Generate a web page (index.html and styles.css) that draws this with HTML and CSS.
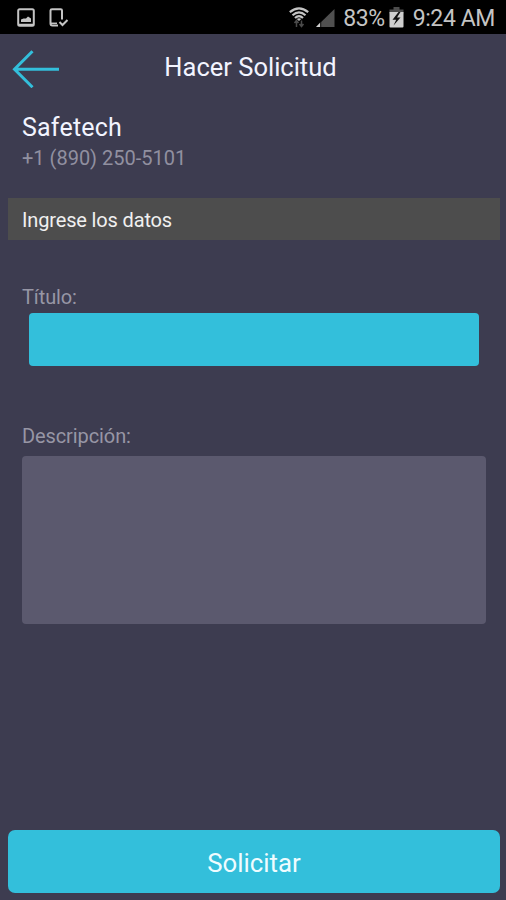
FILE: index.html
```html
<!DOCTYPE html>
<html lang="es">
<head>
    <meta charset="UTF-8">
    <meta name="viewport" content="width=device-width, initial-scale=1.0">
    <title>Hacer Solicitud</title>
    <link rel="stylesheet" href="styles.css">
</head>
<body>

<div class="status-bar">
    <div class="status-left">
        <svg width="18" height="19" viewBox="0 0 18 19" fill="none" stroke="#c4c4c4" stroke-width="2">
            <rect x="1.2" y="1.2" width="15.6" height="16.6" rx="1.5"/>
            <path d="M4 14V11.500l2.500-1L9 10.500l2-2 3 2V14z" fill="#c4c4c4" stroke="none"/>
            <path d="M2 16.500h14" stroke-width="1.500"/>
        </svg>
        <svg width="20" height="20" viewBox="0 0 20 20" fill="none" stroke="#c4c4c4" stroke-width="2">
            <path d="M13 11.500V2.500Q13 1.200 11.700 1.200H3Q1.500 1.200 1.500 2.500V15.500Q1.500 17.500 3.500 17.500H9"/>
            <path d="M2 15.300h6" stroke-width="1.500"/>
            <path d="M10.500 14l3 3 5-5"/>
        </svg>
    </div>
    <div class="status-right">
        <svg class="wifi" width="20" height="21" viewBox="0 0 20 21" fill="none" stroke="#c4c4c4" stroke-width="2.200">
            <path d="M.8 5.200Q10-2.500 19.200 5.200"/>
            <path d="M3.500 8.300Q10 2.500 16.500 8.300"/>
            <path d="M6 11Q10 7.300 14 11"/>
            <path d="M7.800 12Q10 10.500 12.200 12L10 14z" fill="#c4c4c4" stroke="none"/>
            <path d="M7.500 20v-6M5.500 16l2-2.500 2 2.500M12.500 13.500v6M10.500 17l2 2.500 2-2.500" stroke="#4a4a4a" stroke-width="1.500"/>
        </svg>
        <svg class="signal" width="19" height="18" viewBox="0 0 19 18">
            <path d="M18.500 0V18H0z" fill="#505050"/>
            <path d="M5.200 12.500V18H0z" fill="#000"/>
            <path d="M4.200 13.500V18H0z" fill="#d0d0d0"/>
        </svg>
        <span class="percent">83%</span>
        <svg class="battery" width="15" height="21" viewBox="0 0 15 21">
            <path d="M4.500 0h6v2.500h4v4H.5v-4h4z" fill="#4c4c4c"/>
            <path d="M.5 5h14v14.500q0 1-1 1h-12q-1 0-1-1z" fill="#cfcfcf"/>
            <path d="M9.500 5L3.500 12.800h3.700L4.500 18.500l7-8H8L11.500 5z" fill="#111"/>
        </svg>
        <span class="time">9:24 AM</span>
    </div>
</div>

<header>
    <button class="back" type="button" aria-label="Volver">
        <svg width="48" height="38" viewBox="0 0 48 38" fill="none" stroke="#33bfdb" stroke-width="3">
            <path d="M20.500 1.200L2.500 19.200l18 18M2.500 19.200H47"/>
        </svg>
    </button>
    <h1>Hacer Solicitud</h1>
</header>

<main>
    <div class="company">
        <h2>Safetech</h2>
        <p>+1 (890) 250-5101</p>
    </div>

    <div class="section-title"><span>Ingrese los datos</span></div>

    <form>
        <label for="titulo"><span>Título:</span></label>
        <input type="text" id="titulo" name="titulo">
        <label class="label-desc" for="descripcion"><span>Descripción:</span></label>
        <textarea id="descripcion" name="descripcion"></textarea>
        <button class="submit" type="submit"><span>Solicitar</span></button>
    </form>
</main>

</body>
</html>
```
FILE: styles.css
```css
* {
    box-sizing: border-box;
}

body {
    font-family: Roboto, 'Liberation Sans', sans-serif;
    background-color: #3d3c50;
    margin: 0;
    height: 900px;
    display: flex;
    flex-direction: column;
    overflow: hidden;
}

h1, h2, p {
    margin: 0;
    font-weight: normal;
}

svg {
    display: block;
    flex: none;
}

/* Android status bar */
.status-bar {
    height: 34px;
    background-color: #000;
    color: #c4c4c4;
    display: flex;
    justify-content: space-between;
    padding: 0 11px 0 17px;
}

.status-left {
    display: flex;
    gap: 14px;
    padding-top: 8px;
}

.status-right {
    display: flex;
    align-items: flex-start;
    font-size: 23px;
    letter-spacing: -0.4px;
    line-height: 37px;
    white-space: nowrap;
}

.wifi {
    margin: 7px 7px 0 0;
}

.signal {
    margin: 9px 8px 0 0;
}

.battery {
    margin: 7px 9px 0 4px;
}

header {
    height: 66px;
    display: grid;
    grid-template-columns: 60px 1fr 65px;
    color: #f2f4ff;
}

.back {
    background: none;
    border: none;
    padding: 16px 0 0 12px;
    display: flex;
    align-items: flex-start;
}

h1 {
    font-size: 25.5px;
    line-height: 67px;
    text-align: center;
}

main {
    flex: 1;
    display: flex;
    flex-direction: column;
    padding: 0 6px 7px 8px;
}

.company {
    height: 98px;
    padding: 12px 14px 0;
}

h2 {
    color: #f2f4ff;
    font-size: 25px;
    letter-spacing: 0.2px;
    line-height: 32px;
}

.company p {
    color: #9190a0;
    font-size: 20px;
    line-height: 28px;
}

.section-title {
    height: 42px;
    padding-left: 14px;
    background-color: #4d4d4d;
    color: #f0f0f0;
    font-size: 20px;
    letter-spacing: -0.15px;
    line-height: 44px;
}

form {
    flex: 1;
    display: flex;
    flex-direction: column;
    align-items: flex-start;
}

label {
    margin: 45px 0 4px 14px;
    color: #9796a5;
    font-size: 20px;
    letter-spacing: -0.1px;
    line-height: 24px;
}

.label-desc {
    margin: 58px 0 8px 14px;
}

input {
    width: 450px;
    height: 53px;
    margin-left: 20.5px;
    border: none;
    border-radius: 4px;
    background-color: #33bfdb;
}

textarea {
    width: 464px;
    height: 168px;
    margin-left: 14px;
    border: none;
    border-radius: 4px;
    background-color: #5b596e;
    resize: none;
}

.submit {
    width: 492px;
    height: 63px;
    margin-top: auto;
    padding: 2px 0 0;
    border: none;
    border-radius: 7px;
    background-color: #33bfdb;
    color: #effcff;
    font-family: inherit;
    font-size: 25.800px;
}
```
